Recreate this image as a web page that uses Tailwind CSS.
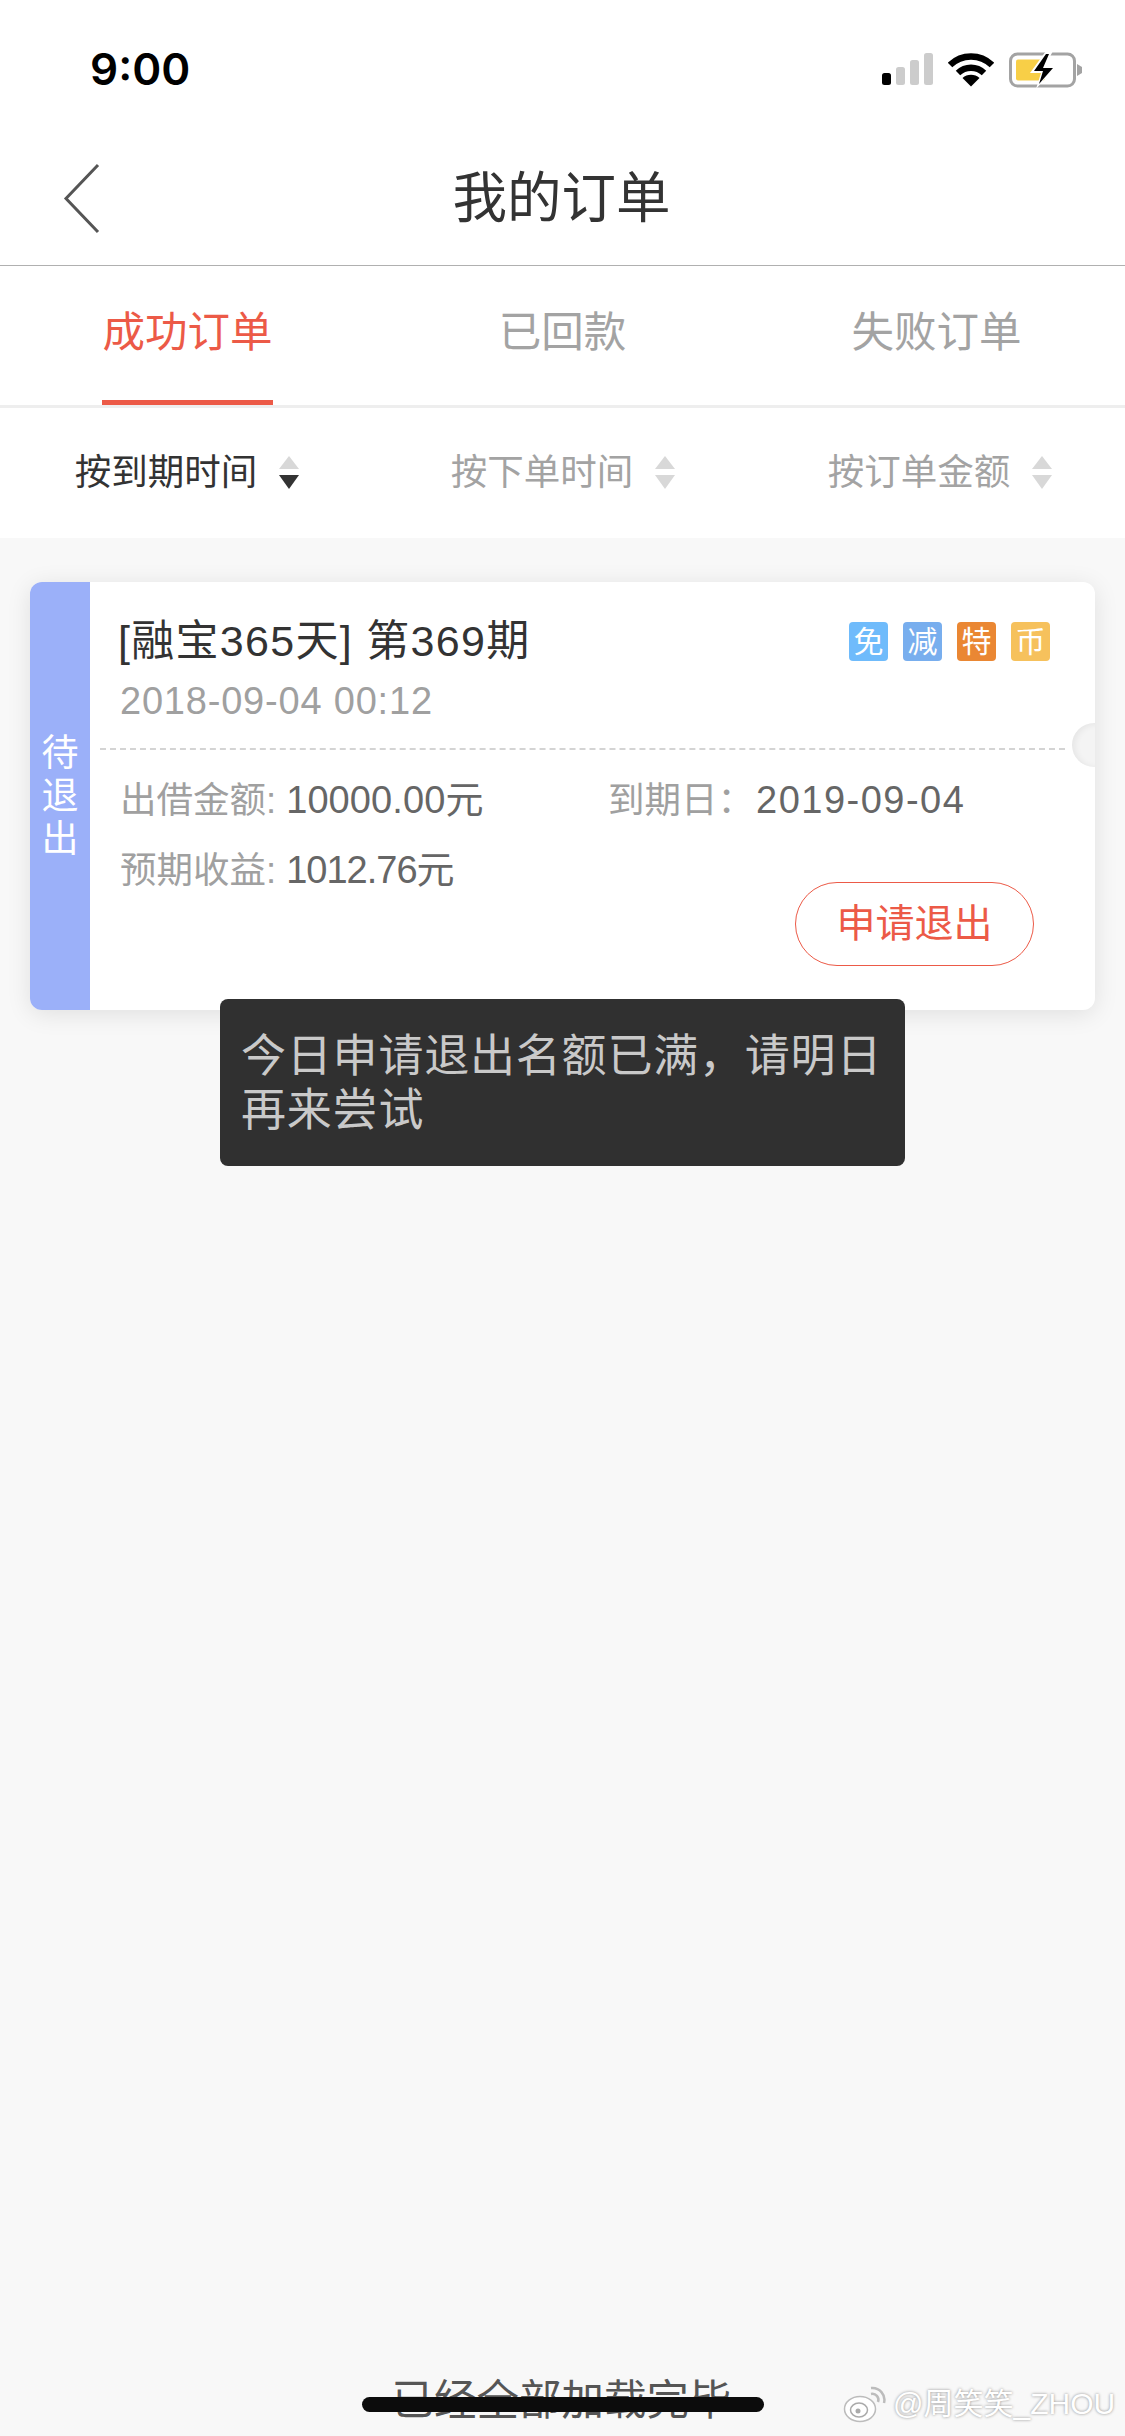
<!DOCTYPE html>
<html lang="zh-CN">
<head>
    <meta charset="UTF-8">
    <meta name="viewport" content="width=device-width, initial-scale=1.0">
    <title>我的订单</title>
    <script src="https://cdn.jsdelivr.net/npm/@tailwindcss/browser@4"></script>
</head>
<body class="bg-[#f8f8f8] font-['Liberation_Sans','Noto_Sans_CJK_SC',sans-serif]">
<div class="relative w-[1125px] h-[2436px] overflow-hidden">

    <!-- Status bar -->
    <div class="bg-white h-[132px] flex items-start justify-between pl-[90px] pr-[42px] pt-[41px]">
        <span class="font-['Inter',sans-serif] font-semibold text-[44px] leading-[56px] text-black">9:00</span>
        <div class="flex items-center gap-[15px] pt-[11px]">
            <svg width="51" height="34" viewBox="0 0 51 34">
                <rect x="0" y="20" width="9" height="12" rx="2.5" fill="#000"/>
                <rect x="14" y="14" width="9" height="18" rx="2.5" fill="#ccc"/>
                <rect x="28" y="7" width="9" height="25" rx="2.5" fill="#ccc"/>
                <rect x="42" y="0" width="9" height="32" rx="2.5" fill="#ccc"/>
            </svg>
            <svg width="46" height="34" viewBox="0 0 46 34">
                <path d="M2 12 A30 30 0 0 1 44 12" fill="none" stroke="#000" stroke-width="6.5"/>
                <path d="M10 20 A19 19 0 0 1 36 20" fill="none" stroke="#000" stroke-width="6.5"/>
                <path d="M14.5 25 L23 33.5 L31.5 25 A13 13 0 0 0 14.5 25 Z" fill="#000"/>
            </svg>
            <svg width="74" height="36" viewBox="0 0 74 36">
                <rect x="1.5" y="2" width="64" height="32" rx="7" fill="none" stroke="#a3a3a3" stroke-width="3"/>
                <rect x="7" y="7.5" width="29" height="21" rx="2" fill="#f8cf47"/>
                <path d="M68 12 L73 15 L73 21 L68 24 Z" fill="#a3a3a3"/>
                <path d="M37 -1 L21 21 L32 21 L27 37 L47 14 L36 14 L44 -1 Z" fill="#fff"/>
                <path d="M37 2 L25 19 L34 19 L30 32 L44 16 L34 16 L40 2 Z" fill="#000"/>
            </svg>
        </div>
    </div>

    <!-- Nav bar -->
    <div class="relative bg-white h-[134px] border-b border-[#b0b0b0] flex items-center justify-center">
        <svg class="absolute left-[63px] top-[31px]" width="38" height="71" viewBox="0 0 38 71">
            <path d="M35 2 L3 35.5 L35 69" fill="none" stroke="#555" stroke-width="3"/>
        </svg>
        <h1 class="text-[54.5px] leading-[64px] text-[#333] font-normal -ml-[2px]">我的订单</h1>
    </div>

    <!-- Tabs -->
    <div class="bg-white h-[139px] grid grid-cols-3 text-[42.5px] text-[#a3a3a3]">
        <div class="flex justify-center">
            <div class="w-[171px] h-full flex items-center justify-center border-b-[5px] border-[#ec5a47] text-[#ec5a47] whitespace-nowrap">成功订单</div>
        </div>
        <div class="flex items-center justify-center pb-[5px]">已回款</div>
        <div class="flex items-center justify-center pb-[5px] pr-[2px]">失败订单</div>
    </div>
    <div class="h-[3px] bg-[#eeeeee]"></div>

    <!-- Sort options -->
    <div class="bg-white h-[130px] grid grid-cols-3 text-[36.5px] text-[#a3a3a3]">
        <div class="flex items-center justify-center gap-[21px] text-[#333]">
            <span>按到期时间</span>
            <svg width="22" height="34" viewBox="0 0 22 34"><path d="M11 0 L21 13 L1 13 Z" fill="#d8d8d8"/><path d="M1 19 L21 19 L11 33 Z" fill="#333"/></svg>
        </div>
        <div class="flex items-center justify-center gap-[21px] pl-[2px]">
            <span>按下单时间</span>
            <svg width="22" height="34" viewBox="0 0 22 34"><path d="M11 0 L21 13 L1 13 Z" fill="#d8d8d8"/><path d="M1 19 L21 19 L11 33 Z" fill="#d8d8d8"/></svg>
        </div>
        <div class="flex items-center justify-center gap-[21px] pl-[6px]">
            <span>按订单金额</span>
            <svg width="22" height="34" viewBox="0 0 22 34"><path d="M11 0 L21 13 L1 13 Z" fill="#d8d8d8"/><path d="M1 19 L21 19 L11 33 Z" fill="#d8d8d8"/></svg>
        </div>
    </div>

    <!-- Order card -->
    <div class="relative mt-[44px] ml-[30px] w-[1065px] h-[428px] bg-white rounded-[12px] shadow-[0_4px_24px_rgba(0,0,0,0.10)] overflow-hidden flex">
        <div class="w-[60px] bg-[#9bb0f9] text-white text-[37px] leading-[43px] flex flex-col items-center justify-center">
            <span>待</span><span>退</span><span>出</span>
        </div>
        <div class="flex-1 flex flex-col">
            <div class="h-[166px] pl-[28px] pr-[45px] pt-[36px]">
                <div class="flex items-center justify-between h-[46px]">
                    <span class="text-[43px] text-[#333] tracking-[1.3px] whitespace-nowrap">[融宝365天] 第369期</span>
                    <div class="flex gap-[15px] text-white text-[30px] leading-[39px] text-center">
                        <span class="w-[39px] h-[39px] rounded-[4px] bg-[#6fbbfb]">免</span>
                        <span class="w-[39px] h-[39px] rounded-[4px] bg-[#78aeee]">减</span>
                        <span class="w-[39px] h-[39px] rounded-[4px] bg-[#ea8733]">特</span>
                        <span class="w-[39px] h-[39px] rounded-[4px] bg-[#f6c15c]">币</span>
                    </div>
                </div>
                <div class="mt-[16px] pl-[2px] text-[38px] leading-[42px] text-[#a0a0a0] tracking-[0.8px]">2018-09-04 00:12</div>
            </div>
            <div class="ml-[10px] mr-[30px] border-t-2 border-dashed border-[#d4d4d4]"></div>
            <div class="pl-[30px] pt-[28px] text-[36.5px] leading-[44px] text-[#a0a0a0]">
                <div class="flex">
                    <div class="w-[488px] flex items-baseline gap-[10px]"><span>出借金额:</span><span class="text-[38px] text-[#666] tracking-[0.1px]">10000.00元</span></div>
                    <div class="flex items-baseline"><span>到期日：</span><span class="text-[38px] text-[#666] ml-[2px] tracking-[1.5px]">2019-09-04</span></div>
                </div>
                <div class="mt-[25px] flex items-baseline gap-[10px]"><span>预期收益:</span><span class="text-[38px] text-[#666] tracking-[-1px]">1012.76元</span></div>
            </div>
        </div>
        <div class="absolute right-[61px] top-[300px] w-[239px] h-[84px] rounded-full border border-[#ec5a47] text-[#ec5a47] text-[39px] flex items-center justify-center">申请退出</div>
        <div class="absolute right-[-21px] top-[141px] w-[44px] h-[44px] rounded-full bg-[#f4f4f4] shadow-[inset_3px_1px_6px_rgba(0,0,0,0.06)]"></div>
    </div>

    <!-- Toast -->
    <div class="absolute left-[220px] top-[999px] w-[685px] h-[167px] rounded-[8px] bg-[#303030] pl-[21px] pt-[31px] text-[45px] leading-[54px] tracking-[0.8px] text-[#c9c9c9]">今日申请退出名额已满，请明日<br>再来尝试</div>

    <!-- Bottom hint, home indicator, watermark -->
    <div class="absolute left-0 right-0 top-[2376px] text-center text-[42.5px] leading-[50px] text-[#555] pr-[2px]">已经全部加载完毕</div>
    <div class="absolute left-[362px] top-[2397px] w-[402px] h-[15px] rounded-full bg-[#0c0c0c]"></div>
    <div class="absolute left-[843px] top-[2384px] flex items-center gap-[6px]">
        <svg width="44" height="38" viewBox="0 0 44 38">
            <ellipse cx="17" cy="24" rx="15.5" ry="12.5" fill="#fff" stroke="#bcbcbc" stroke-width="1.5"/>
            <ellipse cx="16" cy="25" rx="8.5" ry="7" fill="none" stroke="#aaa" stroke-width="1.5"/>
            <circle cx="15" cy="26" r="2.5" fill="#aaa"/>
            <path d="M28 3 A12 12 0 0 1 41 18" fill="none" stroke="#bcbcbc" stroke-width="2.5"/>
            <path d="M28 9 A6 6 0 0 1 35 17" fill="none" stroke="#bcbcbc" stroke-width="2.5"/>
        </svg>
        <span class="text-[30px] leading-[40px] text-white whitespace-nowrap [text-shadow:0_0_3px_rgba(0,0,0,0.45)]">@周笑笑_ZHOU</span>
    </div>
</div>
</body>
</html>
